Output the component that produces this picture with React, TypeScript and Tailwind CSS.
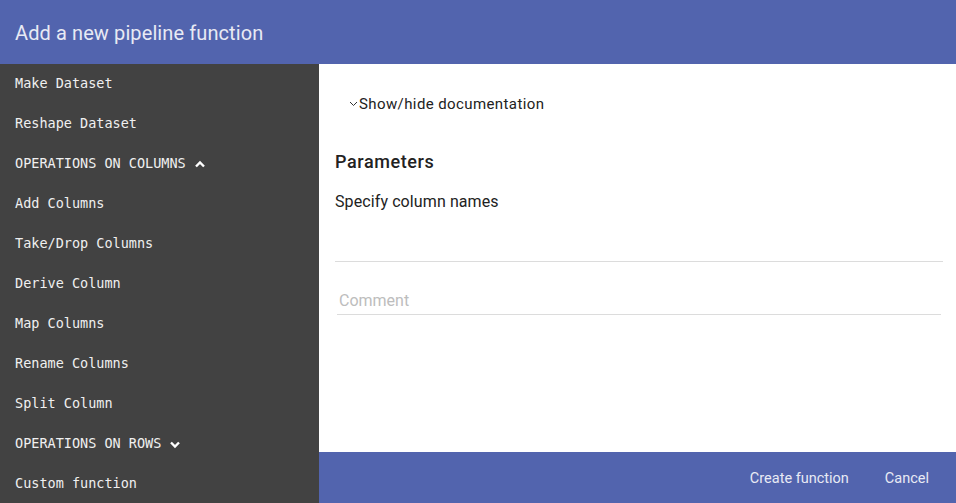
import React from 'react';

const items: { label: string; kind?: 'open' | 'closed' }[] = [
  { label: 'Make Dataset' },
  { label: 'Reshape Dataset' },
  { label: 'OPERATIONS ON COLUMNS', kind: 'open' },
  { label: 'Add Columns' },
  { label: 'Take/Drop Columns' },
  { label: 'Derive Column' },
  { label: 'Map Columns' },
  { label: 'Rename Columns' },
  { label: 'Split Column' },
  { label: 'OPERATIONS ON ROWS', kind: 'closed' },
  { label: 'Custom function' },
];

const Chevron = ({ up }: { up?: boolean }) => (
  <svg width="12" height="12" viewBox="0 0 12 12" className="ml-2 mt-[2px]">
    <path
      d={up ? 'M2 8.5 L6 4.5 L10 8.5' : 'M2 4.5 L6 8.5 L10 4.5'}
      fill="none"
      stroke="white"
      strokeWidth="2.4"
    />
  </svg>
);

export default function App() {
  return (
    <div className="w-[956px] h-[503px] flex flex-col overflow-hidden font-['Roboto',sans-serif]">
      <div className="h-16 shrink-0 bg-[#5264ae] flex items-center px-[15px] pt-[2px]">
        <h1 className="text-[20px] text-[#e8eaf4] tracking-[0.1px]">Add a new pipeline function</h1>
      </div>
      <div className="flex flex-1 min-h-0">
        <div className="w-[319px] shrink-0 bg-[#424242] font-['DejaVu_Sans_Mono',monospace] text-[13.5px] text-[#f0f0f0]">
          <div className="-mt-px">
            {items.map((it) => (
              <div key={it.label} className="h-10 flex items-center px-[15px]">
                <span>{it.label}</span>
                {it.kind === 'open' && <Chevron up />}
                {it.kind === 'closed' && <Chevron />}
              </div>
            ))}
          </div>
        </div>
        <div className="flex-1 flex flex-col">
          <div className="flex-1 bg-white px-4">
            <div className="mt-[30px] h-5 flex items-center pl-[14px] text-[15px] text-[#222] tracking-[0.4px]">
              <svg width="9" height="6" viewBox="0 0 9 6" className="mr-[1px]">
                <path d="M1 1 L4.5 4.5 L8 1" fill="none" stroke="#333" strokeWidth="1" />
              </svg>
              <span>Show/hide documentation</span>
            </div>
            <h2 className="mt-[36px] text-[18px] font-medium text-[#222] leading-6 tracking-[0.6px]">Parameters</h2>
            <p className="mt-[16px] text-[16px] text-[#222] leading-6 tracking-[0.1px]">Specify column names</p>
            <div className="mt-[47px] h-px bg-[#dcdcdc] mr-[-3px]" />
            <div className="mt-[27px] ml-[2px] mr-[-1px] border-b border-[#dcdcdc] pb-px">
              <span className="pl-[2px] text-[16px] text-[#bdbdbd]">Comment</span>
            </div>
          </div>
          <div className="h-[51px] shrink-0 bg-[#5264ae] flex items-center justify-end pr-[19px] pt-[2px] text-[14.5px] text-[#e8eaf4]">
            <button className="px-2">Create function</button>
            <button className="ml-[20px] px-2">Cancel</button>
          </div>
        </div>
      </div>
    </div>
  );
}
